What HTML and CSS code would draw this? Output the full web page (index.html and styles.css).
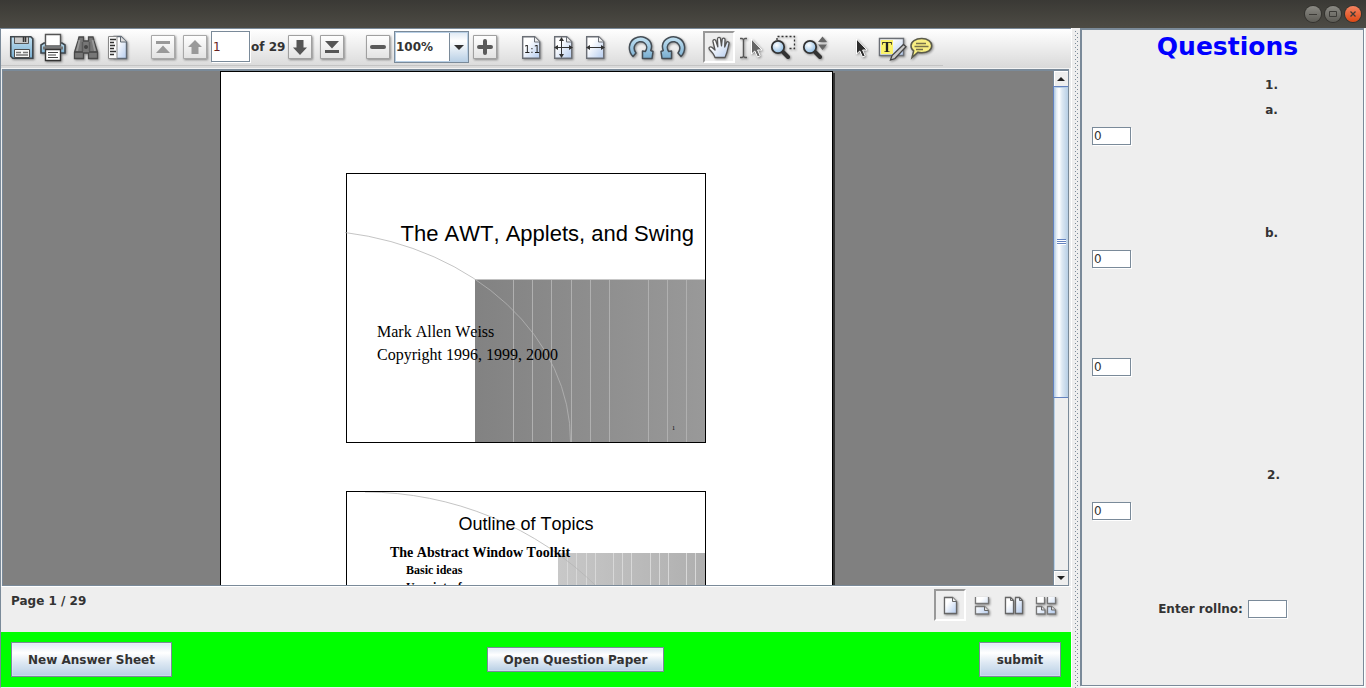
FILE: index.html
```
<!DOCTYPE html>
<html lang="en">
<head>
<meta charset="utf-8">
<title>Answer Sheet</title>
<link rel="stylesheet" href="styles.css">
</head>
<body>
<svg class="defs" aria-hidden="true">
  <defs>
    <linearGradient id="paper" x1="0" y1="0" x2="1" y2="1"><stop offset=".3" stop-color="#fff"/><stop offset="1" stop-color="#b4cbee"/></linearGradient>
    <linearGradient id="blue" x1="0" y1="0" x2="0" y2="1"><stop offset="0" stop-color="#c3e2f3"/><stop offset="1" stop-color="#78add0"/></linearGradient>
    <linearGradient id="box" x1="0" y1="0" x2="0" y2="1"><stop offset="0" stop-color="#fff"/><stop offset="1" stop-color="#e2e2e2"/></linearGradient>
    <radialGradient id="lens" cx=".4" cy=".35" r=".7"><stop offset="0" stop-color="#fff"/><stop offset="1" stop-color="#86b8e2"/></radialGradient>
    <linearGradient id="shade1"><stop offset="0" stop-color="#828282"/><stop offset="1" stop-color="#999"/></linearGradient>
    <linearGradient id="shade2"><stop offset="0" stop-color="#c8c8c8"/><stop offset="1" stop-color="#afafaf"/></linearGradient>
  </defs>
</svg>

<header class="titlebar">
  <button class="win" aria-label="Minimize"><svg viewBox="0 0 16 16"><path d="M4 8.500h8" stroke="#3c3b37"/></svg></button>
  <button class="win" aria-label="Maximize"><svg viewBox="0 0 16 16"><path d="M4.500 5.500h7v5h-7z" fill="none" stroke="#3c3b37"/></svg></button>
  <button class="win win-close" aria-label="Close"><svg viewBox="0 0 16 16"><path d="M5.500 5.500l5 5m0-5l-5 5" stroke="#3c3b37" stroke-width="1.300"/></svg></button>
</header>

<div class="workspace">
  <main class="viewer">
    <div class="toolbar">
      <div class="tools">
        <div class="group">
          <button class="tool" aria-label="Save"><svg viewBox="0 0 32 32"><path d="M5.800 5.800h20l2 2v19.400h-20l-2-2z" fill="url(#blue)" stroke="#3f474d" stroke-width="1.600"/><path d="M9.500 6h14v6.500h-14z" fill="#c9c9c9" stroke="#555"/><path d="M18.500 6v5M20.500 6v5" stroke="#333" stroke-width="1.500"/><path d="M9.500 18.500h15v8h-15z" fill="#f6f6f6" stroke="#4b4b4b"/><path d="M11 21.500h5m2 0h5M11 24h12" stroke="#777" stroke-width="1.400"/></svg></button>
          <button class="tool" aria-label="Print"><svg viewBox="0 0 32 32"><path d="M4 20v-6l3-2h18l3 2v8H4z" fill="url(#blue)" stroke="#3f474d" stroke-width="1.600"/><path d="M8.500 3.500h15V15h-15z" fill="#fff" stroke="#555" stroke-width="1.400"/><path d="M6 15.500h20v3H6z" fill="#777"/><path d="M8.500 18.500h15v11h-15z" fill="#fff" stroke="#333" stroke-width="1.400"/><path d="M11 21.500h10M11 24h8M11 26.500h10" stroke="#444" stroke-width="1.200"/></svg></button>
          <button class="tool" aria-label="Search"><svg viewBox="0 0 32 32"><path d="M10 6h4.500v4h5V6H24l1 4 3.500 11v6.500h-9V22h-5v5.500h-9V21L9 10z" fill="#777" stroke="#4a4a4a" stroke-width="1.300"/><path d="M10.500 9L8 20M23.500 9L26 20" stroke="#999" stroke-width="1.800"/><path d="M13.500 11v9M20.500 11v9" stroke="#5a5a5a" stroke-width="1.500"/><circle cx="17" cy="16" r="2" fill="#444"/><path d="M6 21h8M20 21h8" stroke="#444" stroke-width="1.500"/></svg></button>
          <button class="tool" aria-label="Show utility pane"><svg viewBox="0 0 32 32"><path d="M13 5.500h7l5.500 5.500v16.500H13z" fill="url(#paper)" stroke="#5f6873" stroke-width="1.400"/><path d="M19.500 5.500V11h6" fill="#ddd" stroke="#5f6873"/><path d="M7.500 5.500H16v22H7.500z" fill="#fafafa" stroke="#888"/><path d="M9 8.500h6M9 11.500h4M9 14.500h5M9 17.500h4M9 20.500h6M9 23.500h4" stroke="#333" stroke-width="1.400"/></svg></button>
        </div>
        <div class="group">
          <button class="tool" aria-label="First page"><svg viewBox="0 0 32 32"><path d="M4.500 4.500h23v23h-23z" fill="url(#box)" stroke="#a8a8a8"/><path d="M9 10h14v3H9zM16 14.500l7 7.500H9z" fill="#999"/></svg></button>
          <button class="tool" aria-label="Previous page"><svg viewBox="0 0 32 32"><path d="M4.500 4.500h23v23h-23z" fill="url(#box)" stroke="#a8a8a8"/><path d="M16 9l7 7h-3.500v7h-7v-7H9z" fill="#999"/></svg></button>
          <input class="field page-no" type="text" value="1" aria-label="Page number">
          <span class="page-total">of 29</span>
          <button class="tool" aria-label="Next page"><svg viewBox="0 0 32 32"><path d="M4.500 4.500h23v23h-23z" fill="url(#box)" stroke="#a0a0a0"/><path d="M16 24l-7-7.500h3.500V9h7v7.500H23z" fill="#555"/></svg></button>
          <button class="tool" aria-label="Last page"><svg viewBox="0 0 32 32"><path d="M4.500 4.500h23v23h-23z" fill="url(#box)" stroke="#a0a0a0"/><path d="M9 19h14v3H9zM16 17.500L23 10H9z" fill="#555"/></svg></button>
        </div>
        <div class="group">
          <button class="tool" aria-label="Zoom out"><svg viewBox="0 0 32 32"><path d="M4.500 4.500h23v23h-23z" fill="url(#box)" stroke="#a0a0a0"/><path d="M10 16h12" stroke="#5a5a5a" stroke-width="4" stroke-linecap="round"/></svg></button>
          <span class="combo">
            <select aria-label="Zoom level"><option>100%</option></select>
            <svg viewBox="0 0 20 30"><path d="M5 13h10l-5 5z" fill="#333"/></svg>
          </span>
          <button class="tool" aria-label="Zoom in"><svg viewBox="0 0 32 32"><path d="M4.500 4.500h23v23h-23z" fill="url(#box)" stroke="#a0a0a0"/><path d="M10 16h12M16 10v12" stroke="#5a5a5a" stroke-width="4" stroke-linecap="round"/></svg></button>
        </div>
        <div class="group">
          <button class="tool" aria-label="Actual size"><svg viewBox="0 0 32 32"><path d="M7.700 5.700h12l5 5v16.600h-17z" fill="url(#paper)" stroke="#6b6f76" stroke-width="1.400"/><path d="M19.500 6v5h5" fill="#eee" stroke="#6b6f76"/><text class="ratio" x="9" y="22">1:1</text></svg></button>
          <button class="tool" aria-label="Fit page"><svg viewBox="0 0 32 32"><path d="M7.700 5.700h12l5 5v16.600h-17z" fill="url(#paper)" stroke="#6b6f76" stroke-width="1.400"/><path d="M19.500 6v5h5" fill="#eee" stroke="#6b6f76"/><path d="M8 16.500h17M14.500 8v17" stroke="#333"/><path d="M7 16.500l4-2.500v5zM26 16.500l-4-2.500v5zM14.500 6l-2.500 4h5zM14.500 27l-2.500-4h5z" fill="#333"/></svg></button>
          <button class="tool" aria-label="Fit width"><svg viewBox="0 0 32 32"><path d="M7.700 5.700h12l5 5v16.600h-17z" fill="url(#paper)" stroke="#6b6f76" stroke-width="1.400"/><path d="M19.500 6v5h5" fill="#eee" stroke="#6b6f76"/><path d="M8 16.500h17" stroke="#333"/><path d="M7 16.500l4-2.500v5zM26 16.500l-4-2.500v5z" fill="#333"/></svg></button>
        </div>
        <div class="group">
          <button class="tool" aria-label="Rotate right"><svg viewBox="0 0 32 32"><path id="rot" d="M8 25.500C2.500 20 3.500 11 9.500 7.500c7-4 16-.5 17 7 .2 2-.2 3.500-.8 5l2.300 1-1 7H17.500v-7.500l2.800.5c2.200-3 1.700-6.500-.8-8.500-3-2.300-7.500-1.500-9.500 2-1.500 2.800-1 5.500 1 8z" fill="url(#blue)" stroke="#444d55" stroke-width="1.500" stroke-linejoin="round"/></svg></button>
          <button class="tool" aria-label="Rotate left"><svg viewBox="0 0 32 32"><use href="#rot" transform="translate(32 0) scale(-1 1)"/></svg></button>
        </div>
        <div class="group">
          <button class="tool pressed" aria-label="Pan" aria-pressed="true"><svg viewBox="0 0 32 32"><path d="M12 26.500c-1-3.500-3-5.500-5.500-8-1.500-1.800.8-3.300 2.600-2l2.900 2.500-2-8.500c-.4-2 2.200-2.500 2.800-.7l2 6L14.500 8c0-2 2.800-2.200 3-.2l1 7 .7-6.500c.3-1.800 2.800-1.600 2.800.2l-.3 7.500 1.800-4.500c.7-1.500 3-.8 2.500 1-1 4.500-1.600 9-4 14z" fill="url(#paper)" stroke="#555" stroke-width="1.300" stroke-linejoin="round"/></svg></button>
          <button class="tool" aria-label="Select text"><svg viewBox="0 0 32 32"><path d="M5 7.500h2l1.500 1 1.500-1h2M5 26.500h2l1.500-1 1.500 1h2M8.500 8v18" fill="none" stroke="#555" stroke-width="1.400"/><path d="M16.500 8v15l3.300-3 2.700 6 2.700-1.200-2.600-5.800h4.400z" fill="#666" stroke="#fff"/></svg></button>
          <button class="tool" aria-label="Zoom to area"><svg viewBox="0 0 32 32"><path d="M10 9V5.500h17.500v12H22" fill="none" stroke="#333" stroke-width="1.300" stroke-dasharray="2 2"/><path d="M15.500 20.500l5.500 5.500" stroke="#333" stroke-width="4" stroke-linecap="round"/><circle cx="11" cy="16" r="6.200" fill="url(#lens)" stroke="#333" stroke-width="1.800"/></svg></button>
          <button class="tool" aria-label="Dynamic zoom"><svg viewBox="0 0 32 32"><path d="M15.500 20.500l5.500 5.500" stroke="#333" stroke-width="4" stroke-linecap="round"/><circle cx="11" cy="16" r="6.200" fill="url(#lens)" stroke="#333" stroke-width="1.800"/><path d="M23.500 5.500l4.500 5.500h-9zM23.500 19l4.500-5.500h-9z" fill="#666"/></svg></button>
        </div>
        <div class="group">
          <button class="tool" aria-label="Select"><svg viewBox="0 0 32 32"><path d="M11.500 8v15l3.300-3 2.700 6 2.700-1.200-2.600-5.800H22z" fill="#2d2d2d" stroke="#fff"/></svg></button>
          <button class="tool" aria-label="Highlight text"><svg viewBox="0 0 32 32"><path d="M2.500 7.500h24v17h-24z" fill="url(#paper)" stroke="#6b6f76" stroke-width="1.400"/><path d="M4 9h12v14H4z" fill="#fbf36b"/><text class="glyph" x="5" y="21">T</text><path d="M26.500 13.500l2.500 2.200-11 11.800-4.500 1.500 1.500-4.500z" fill="#c9c9c9" stroke="#444" stroke-width="1.300"/></svg></button>
          <button class="tool" aria-label="Add comment"><svg viewBox="0 0 32 32"><path d="M12.700 7.500c6 0 10 3 10 7.200s-4 7-10 7c-1.400 0-2.600-.1-3.700-.5L3 26.500l1.700-6.700C3 18.600 2 17 2 14.700c0-4.200 4.500-7.200 10.700-7.200z" fill="#f8ef83" stroke="#5a5a4a" stroke-width="1.500"/><path d="M7 12.500h10M5.500 15.500h14M7 18.500h7" stroke="#77724a" stroke-width="1.400"/></svg></button>
        </div>
      </div>
    </div>

    <div class="scrollpane">
      <div class="canvas">
        <article class="page">
          <section class="slide">
            <svg class="art" viewBox="0 0 358 268">
              <path d="M128 105.500h230V268H128z" fill="url(#shade1)"/>
              <path d="M166.500 106v162M185.500 106v162M204.500 106v162M224.500 106v162M243.500 106v162M262.500 106v162M301.500 106v162M320.500 106v162M339.500 106v162" stroke="#b0b0b0"/>
              <path d="M-2 58.500A267 211 0 0 1 223.500 268" fill="none" stroke="#b5b5b5" stroke-width=".8"/>
            </svg>
            <h2 class="slide-title">The AWT, Applets, and Swing</h2>
            <p class="byline">Mark Allen Weiss<br>Copyright 1996, 1999, 2000</p>
            <p class="slide-no">1</p>
          </section>
          <section class="slide slide-outline">
            <svg class="art" viewBox="0 0 358 268">
              <path d="M211 61h147v207H211z" fill="url(#shade2)"/>
              <path d="M220.500 61v207M229.500 61v207M239.500 61v207M248.500 61v207M266.500 61v207M275.500 61v207M284.500 61v207M303.500 61v207M312.500 61v207M321.500 61v207M339.500 61v207M348.500 61v207" stroke="#d8d8d8"/>
              <path d="M18 0A330 328 0 0 1 348 328" fill="none" stroke="#b5b5b5" stroke-width=".8"/>
            </svg>
            <h2 class="slide-title">Outline of Topics</h2>
            <p class="topic">The Abstract Window Toolkit</p>
            <p class="subtopic">Basic ideas</p>
            <p class="subtopic">User interface</p>
          </section>
        </article>
      </div>
      <div class="scrollbar">
        <button class="arrow" aria-label="Scroll up"><svg viewBox="0 0 14 14"><path d="M3 9h8L7 5z" fill="#222"/></svg></button>
        <div class="track"><div class="thumb"><svg class="grip" viewBox="0 0 9 6"><path d="M0 .5h9M0 2.500h9M0 4.500h9" stroke="#6382bf"/><path d="M0 1.500h9M0 3.500h9M0 5.500h9" stroke="#fff"/></svg></div></div>
        <button class="arrow arrow-down" aria-label="Scroll down"><svg viewBox="0 0 14 14"><path d="M3 5h8L7 9z" fill="#222"/></svg></button>
      </div>
    </div>

    <div class="status">
      <span class="page-status">Page 1 / 29</span>
      <div class="group">
        <button class="tool pressed" aria-label="Single page" aria-pressed="true"><svg viewBox="0 0 32 32"><path d="M10.500 8.500h8l4 4v12h-12z" fill="url(#paper)" stroke="#666" stroke-width="1.300"/><path d="M18.500 8.500v4h4" fill="#eee" stroke="#666"/></svg></button>
        <button class="tool" aria-label="Continuous pages"><svg viewBox="0 0 32 32"><path d="M9.500 8v6.500h13V8M9.500 25v-7.500h9l4 4V25z" fill="url(#paper)" stroke="#777" stroke-width="1.300"/><path d="M18.500 17.500v4h4" fill="#ddd" stroke="#666"/></svg></button>
        <button class="tool" aria-label="Facing pages"><svg viewBox="0 0 32 32"><path d="M7.500 8.500h5l3 3v13h-8zM17.500 8.500h4l3 3v13h-7z" fill="url(#paper)" stroke="#666" stroke-width="1.300"/><path d="M12.500 8.500v3h3M21.500 8.500v3h3" fill="none" stroke="#666"/></svg></button>
        <button class="tool" aria-label="Continuous facing pages"><svg viewBox="0 0 32 32"><path d="M6.500 8v6.500h8V8M17.500 8v6.500h8V8M6.500 25v-7.500h5l3.500 3.500v4zM17.500 25v-7.500h4l4 3.500v4z" fill="url(#paper)" stroke="#777" stroke-width="1.300"/><path d="M11.500 17.500V21H15M21.500 17.500V21h4" fill="#ddd" stroke="#666"/></svg></button>
      </div>
    </div>

    <footer class="actions">
      <button class="btn btn-tall">New Answer Sheet</button>
      <button class="btn">Open Question Paper</button>
      <button class="btn btn-tall">submit</button>
    </footer>
  </main>

  <div class="divider"></div>

  <form class="questions">
    <h1 class="heading">Questions</h1>
    <p class="number">1.</p>
    <label class="number part" for="q1a">a.</label>
    <input class="field mark" id="q1a" type="text" value="0">
    <label class="number part-b" for="q1b">b.</label>
    <input class="field mark" id="q1b" type="text" value="0">
    <input class="field mark mark-extra" type="text" value="0" aria-label="Mark for question 1, part c">
    <label class="number question" for="q2">2.</label>
    <input class="field mark" id="q2" type="text" value="0">
    <div class="roll">
      <label for="roll">Enter rollno:</label>
      <input class="field" id="roll" type="text">
    </div>
  </form>
</div>
</body>
</html>
```
FILE: styles.css
```
* { box-sizing: border-box; }

body {
  margin: 0;
  height: 100vh;
  display: flex;
  flex-direction: column;
  overflow: hidden;
  background: #eee;
  color: #333;
  font: bold 12px/16px "DejaVu Sans", sans-serif;
}

h1, h2, p { margin: 0; }
button, input, select { font: inherit; color: inherit; margin: 0; border-radius: 0; }
button { padding: 0; }
svg { display: block; }
.defs { position: absolute; width: 0; height: 0; }

.titlebar {
  flex: none;
  height: 28px;
  display: flex;
  justify-content: flex-end;
  align-items: center;
  gap: 4px;
  padding: 0 5px;
  background: linear-gradient(#3a3935, #4d4b44);
}
.win {
  width: 16px;
  height: 16px;
  border: 0;
  border-radius: 50%;
  background: linear-gradient(#8b8a84, #5d5c56);
  box-shadow: 0 0 0 1px #33322e;
}
.win-close { background: linear-gradient(#f58461, #dd4814); }

.workspace { flex: 1; min-height: 0; display: flex; }

.viewer {
  flex: 1;
  min-width: 0;
  display: flex;
  flex-direction: column;
  border-left: 1px solid #7a8a99;
  border-top: 1px solid #7a8a99;
  border-bottom: 1px solid #eee;
}

.toolbar {
  flex: none;
  height: 40px;
  padding: 1px 0 0;
  background: linear-gradient(#fff, #d9d9d9);
  border-bottom: 1px solid #f4f4f4;
}
.tools {
  display: flex;
  gap: 14px;
  width: max-content;
  height: 36px;
  padding: 1px 2px 0 4px;
  border-bottom: 1px solid #c4c4c4;
}
.group { display: flex; align-items: flex-start; }
.tool {
  flex: none;
  width: 32px;
  height: 32px;
  border: 0;
  background: transparent;
}
.tool svg { width: 32px; height: 32px; filter: drop-shadow(1px 1px 1px #0006); }
.pressed {
  border: 2px solid;
  border-color: #999 #fff #fff #999;
  background: #eee;
}
.pressed svg { margin: -2px; }
.ratio { font: 10px "DejaVu Sans", sans-serif; fill: #222; }
.glyph { font: bold 15px "Liberation Serif", serif; fill: #222; }

.field {
  width: 39px;
  height: 18px;
  padding: 0 0 0 1px;
  border: 1px solid #7a8a99;
  outline: 0;
  background: #fff;
  box-shadow: 1px 1px 0 #fff;
  font-weight: normal;
}
.page-no { height: 31px; color: #622; }
.page-total { width: 34px; line-height: 32px; padding-left: 1px; white-space: nowrap; }

.combo { display: grid; width: 75px; height: 32px; }
.combo select {
  grid-area: 1 / 1;
  appearance: none;
  padding: 0 20px 0 1px;
  border: 1px solid #7a8a99;
  outline: 1px solid #b8cfe5;
  outline-offset: -2px;
  background:
    linear-gradient(#7a8a99, #7a8a99) right 18px top / 1px 100% no-repeat,
    linear-gradient(#dde8f3, #fff 30%, #b8cfe5) right / 18px 100% no-repeat,
    #fff;
}
.combo svg { grid-area: 1 / 1; justify-self: end; align-self: center; width: 20px; height: 30px; pointer-events: none; }

.scrollpane {
  flex: 1;
  min-height: 0;
  display: flex;
  margin: 0 2px 0 1px;
  border: 1px solid #7a8a99;
  border-top-width: 2px;
}
.canvas {
  flex: 1;
  min-width: 0;
  display: flex;
  justify-content: center;
  align-items: flex-start;
  overflow: hidden;
  background: #808080;
}
.page {
  flex: none;
  width: 613px;
  min-height: 792px;
  margin-right: 3px;
  padding: 101px 126px 0 125px;
  border: 1px solid #000;
  background: #fff;
  box-shadow: 2px 2px 0 #333;
}
.slide {
  position: relative;
  height: 270px;
  margin-bottom: 48px;
  border: 1px solid #000;
  color: #000;
}
.art { position: absolute; inset: 0; width: 100%; height: 100%; }
.slide:first-child .art { overflow: visible; }
.slide-title, .byline, .slide-no, .topic, .subtopic { position: relative; }
.slide-title {
  padding: 46px 11px 0;
  text-align: right;
  font: 22px/28px "Liberation Sans", sans-serif;
}
.byline {
  padding: 72px 0 0 30px;
  font: 16px/23px "Liberation Serif", serif;
}
.slide-no {
  padding: 58px 30px 0 0;
  text-align: right;
  font: 6px/8px "Liberation Serif", serif;
}
.slide-outline .slide-title {
  padding: 20px 0 0;
  text-align: center;
  font-size: 18px;
  line-height: 24px;
}
.topic {
  padding: 8px 0 0 43px;
  font: bold 14px/18px "Liberation Serif", serif;
}
.subtopic {
  padding-left: 59px;
  font: bold 12px/17px "Liberation Serif", serif;
}
.slide h2, .slide p { font-kerning: none; }

.scrollbar {
  flex: none;
  width: 15px;
  display: flex;
  flex-direction: column;
  border-left: 1px solid #7a8a99;
}
.arrow {
  flex: none;
  height: 15px;
  border: 0;
  background: #eee;
  box-shadow: inset 1px 1px 0 #fff;
}
.arrow svg { width: 14px; height: 14px; }
.arrow-down { border-top: 1px solid #7a8a99; }
.track { flex: 1; box-shadow: inset 1px 0 0 #b8cfe5; }
.thumb {
  height: 64.5%;
  display: grid;
  place-items: center;
  border: 1px solid #6382bf;
  border-width: 1px 0;
  background: linear-gradient(90deg, #b8cfe5 0 1px, #dde8f3 2px, #fff 5px, #dde8f3 8px, #b8cfe5);
  box-shadow: -1px 0 0 #6382bf, inset 0 1px 0 #b8cfe5;
}
.grip { width: 9px; height: 6px; }

.status {
  flex: none;
  height: 46px;
  display: flex;
  justify-content: space-between;
  padding: 2px 9px 0 10px;
  border-top: 1px solid #fff;
}
.page-status { padding-top: 4px; }

.actions {
  flex: none;
  display: flex;
  justify-content: space-between;
  align-items: center;
  padding: 10px;
  background: #0f0;
}
.btn {
  min-width: 82px;
  height: 25px;
  padding: 4px 16px 3px;
  line-height: 16px;
  border: 1px solid #7a8a99;
  background: linear-gradient(#dde8f3, #fff 30%, #dde8f3 60%, #b8cfe5);
  box-shadow: inset 0 0 0 1px #ffffff40;
}
.btn-tall { height: 35px; }

.divider {
  flex: none;
  width: 9px;
  border-left: 1px solid #fff;
  background:
    repeating-linear-gradient(#7a8a99 0 1px, transparent 1px 4px) 3px 3px / 1px 100% no-repeat,
    repeating-linear-gradient(transparent 0 2px, #7a8a99 2px 3px, transparent 3px 4px) 5px 3px / 1px 100% no-repeat,
    #eee;
}

.questions {
  flex: none;
  width: 284px;
  display: flex;
  flex-direction: column;
  align-items: flex-start;
  margin: 0 2px 2px 0;
  padding: 0 10px;
  border: 1px solid #7a8a99;
  border-width: 2px 1px 1px 2px;
  box-shadow: 1px 1px 0 #fff;
}
.heading {
  align-self: stretch;
  padding-left: 10px;
  text-align: center;
  color: #00f;
  font-size: 25px;
  line-height: 34px;
}
.number {
  align-self: stretch;
  margin: 13px 0 9px;
  padding-left: 98px;
  text-align: center;
}
.part { margin-top: 0; }
.part-b { margin-top: 80px; }
.mark-extra { margin-top: 90px; }
.question { margin-top: 91px; margin-bottom: 19px; padding-left: 102px; }
.roll {
  align-self: center;
  display: flex;
  align-items: center;
  gap: 5px;
  margin-top: 80px;
}
```
